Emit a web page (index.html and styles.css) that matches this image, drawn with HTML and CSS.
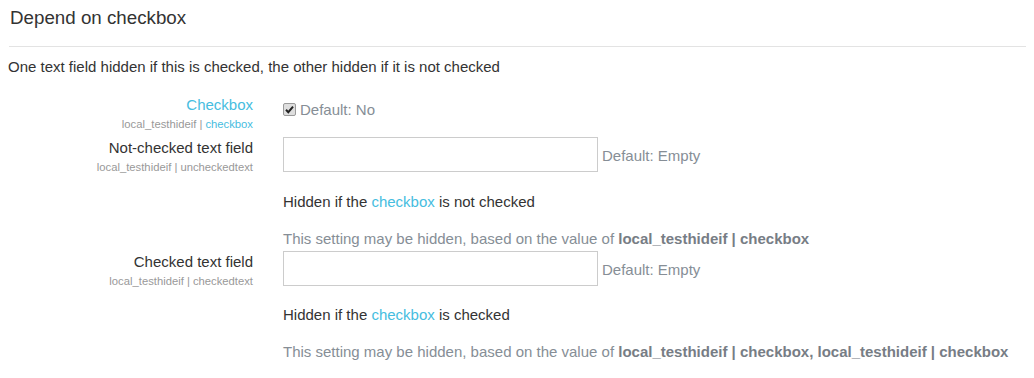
FILE: index.html
```html
<!DOCTYPE html>
<html>
<head>
<meta charset="utf-8">
<link rel="stylesheet" href="styles.css">
</head>
<body>
<h3 class="heading">Depend on checkbox</h3>
<div class="rule"></div>
<p class="desc">One text field hidden if this is checked, the other hidden if it is not checked</p>

<div class="setting row-check">
  <div class="label">
    <div class="title link">Checkbox</div>
    <div class="key">local_testhideif | <span class="link">checkbox</span></div>
  </div>
  <div class="control">
    <label class="checkline"><span class="cb" role="checkbox" aria-checked="true"><svg viewBox="0 0 13 13" width="13" height="13"><path d="M3 6.8 L5.3 9.2 L10 3.6" fill="none" stroke="#222" stroke-width="2"/></svg></span><span class="default">Default: No</span></label>
  </div>
</div>

<div class="setting row-text1">
  <div class="label">
    <div class="title">Not-checked text field</div>
    <div class="key">local_testhideif | uncheckedtext</div>
  </div>
  <div class="control">
    <div class="inputline"><input type="text" class="field"><span class="default">Default: Empty</span></div>
    <p class="help">Hidden if the <span class="link">checkbox</span> is not checked</p>
    <p class="note">This setting may be hidden, based on the value of <b>local_testhideif | checkbox</b></p>
  </div>
</div>

<div class="setting row-text2">
  <div class="label">
    <div class="title">Checked text field</div>
    <div class="key">local_testhideif | checkedtext</div>
  </div>
  <div class="control">
    <div class="inputline"><input type="text" class="field"><span class="default">Default: Empty</span></div>
    <p class="help">Hidden if the <span class="link">checkbox</span> is checked</p>
    <p class="note">This setting may be hidden, based on the value of <b>local_testhideif | checkbox, local_testhideif | checkbox</b></p>
  </div>
</div>
</body>
</html>
```
FILE: styles.css
```css
html, body {
  background: #fff;
}
body {
  margin: 8px;
  font-family: "Liberation Sans", Arial, sans-serif;
  font-size: 15px;
  color: #333;
}
.heading {
  margin: 0 0 0 2px;
  font-size: 18.75px;
  font-weight: normal;
  line-height: 20px;
  color: #333;
}
.rule {
  margin: 18px 0 0 1px;
  height: 1px;
  background: #e3e3e3;
}
.desc {
  margin: 10px 0 0 0;
  line-height: 20px;
}
.link {
  color: #46bde0;
}
.setting {
  display: grid;
  grid-template-columns: 245px 1fr;
  column-gap: 30px;
}
.row-check {
  margin-top: 19px;
}
.label {
  text-align: right;
}
.title {
  font-size: 15px;
  line-height: 18px;
}
.key {
  font-size: 11.25px;
  line-height: 14px;
  color: #999;
  margin-top: 3px;
}
.checkline {
  display: flex;
  align-items: center;
  margin-top: 5px;
}
.cb {
  box-sizing: border-box;
  display: flex;
  align-items: center;
  justify-content: center;
  width: 13px;
  height: 13px;
  margin: 0 4px 0 0;
  border: 1px solid #9a9a9a;
  border-radius: 2px;
  background: #dedede;
}
.cb svg {
  flex: none;
}
.default {
  color: #868e96;
  font-size: 15px;
}
.row-text1 {
  margin-top: 6px;
}
.row-text1 .title, .row-text2 .title {
  margin-top: 2px;
}
.inputline {
  display: flex;
  align-items: center;
}
.field {
  box-sizing: border-box;
  width: 315px;
  height: 35px;
  border: 1px solid #ccc;
  margin: 0 4px 0 0;
  padding: 4px 8px;
  font: inherit;
}
.inputline .default {
  margin-top: 2px;
}
.help {
  margin: 20px 0 0 0;
  line-height: 20px;
}
.note {
  margin: 17px 0 0 0;
  line-height: 20px;
  color: #868e96;
}
.note b {
  color: #777d85;
}
.row-text2 {
  margin-top: 2px;
}
.row-text2 .help {
  margin-top: 19px;
}
```
